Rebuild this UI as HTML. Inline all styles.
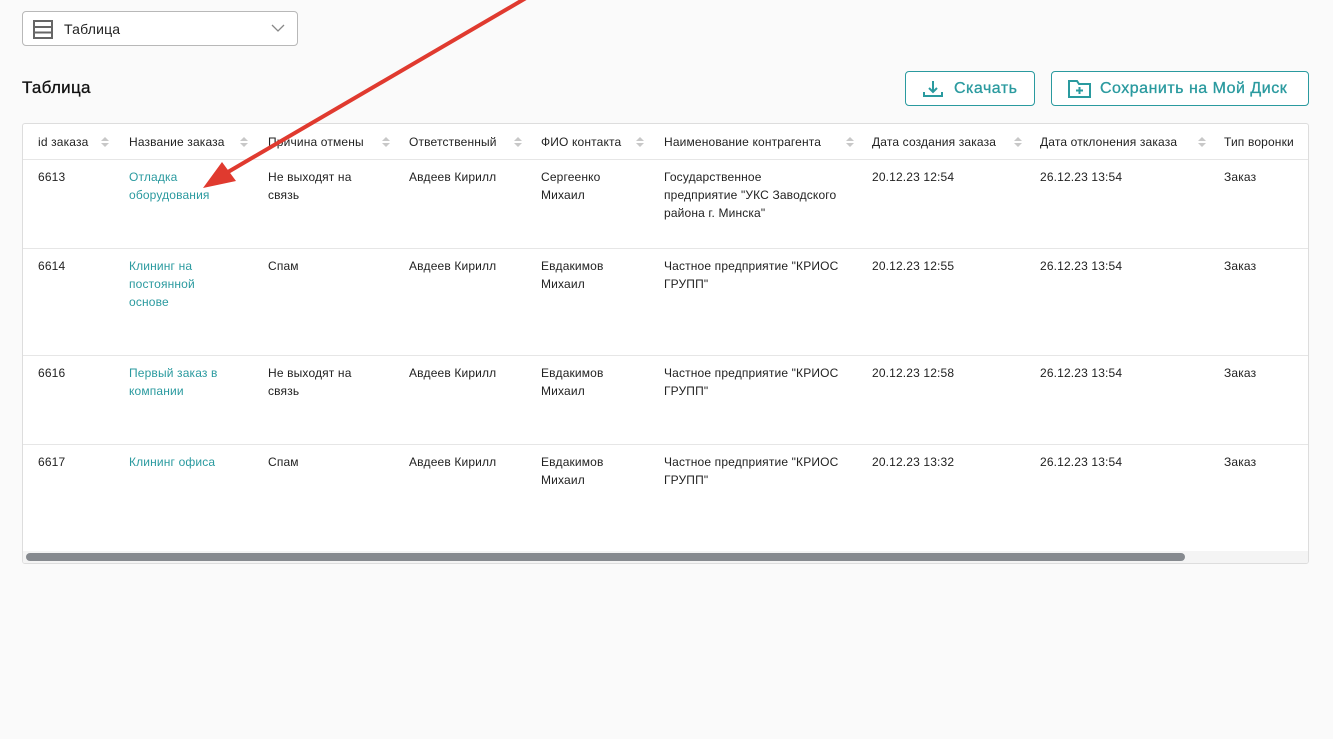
<!DOCTYPE html>
<html><head><meta charset="utf-8"><style>
*{box-sizing:border-box;margin:0;padding:0}
body{width:1333px;height:739px;background:#fafafa;font-family:"Liberation Sans",sans-serif;color:#222;position:relative;overflow:hidden;font-size:12px}
.sel{position:absolute;left:22px;top:11px;width:276px;height:35px;border:1px solid #b8b8b8;border-radius:4px;background:#fff}
.sel span{position:absolute;left:41px;top:9px;font-size:14px;letter-spacing:0.2px}
h2{position:absolute;left:22px;top:78px;font-size:17px;font-weight:normal;color:#111;letter-spacing:0.3px;-webkit-text-stroke:0.3px #111}
.btn{position:absolute;top:71px;height:35px;border:1px solid #2a9a9f;border-radius:4px;color:#2a9a9f;font-size:16px;background:#fff;letter-spacing:0.5px;-webkit-text-stroke:0.3px #2a9a9f}
.btn span{position:absolute;top:8px}
.tbl{position:absolute;left:22px;top:123px;width:1287px;height:441px;background:#fff;border:1px solid #ddd;border-radius:3px;overflow:hidden}
.c{position:absolute;line-height:18px;font-size:12px;letter-spacing:0.15px}
.hd{position:absolute;left:0;right:0;top:0;height:36px;border-bottom:1px solid #e6e6e6}
.rl{position:absolute;left:0;right:0;height:1px;background:#e6e6e6}
.a{color:#2a9a9f}
.s{position:absolute;width:7px}
.s:before,.s:after{content:"";position:absolute;left:0;border-left:4px solid transparent;border-right:4px solid transparent}
.s:before{top:0;border-bottom:4px solid #c8c8c8}
.s:after{top:6px;border-top:4px solid #c8c8c8}
.sb{position:absolute;left:0;right:0;top:427px;height:12px;background:#f4f4f4}
.th{position:absolute;left:3px;top:2px;width:1159px;height:8px;border-radius:4px;background:#868a8f}
</style></head><body>
<div class="sel">
<svg style="position:absolute;left:10px;top:8px" width="20" height="19"><rect x="1" y="1" width="18" height="17" fill="none" stroke="#666" stroke-width="2"/><line x1="1" y1="7" x2="19" y2="7" stroke="#666" stroke-width="2"/><line x1="1" y1="12.5" x2="19" y2="12.5" stroke="#666" stroke-width="2"/></svg>
<span>Таблица</span>
<svg style="position:absolute;left:248px;top:12px" width="14" height="9"><path d="M1 1l6 6 6-6" fill="none" stroke="#888" stroke-width="1.3"/></svg>
</div>
<h2>Таблица</h2>
<div class="btn" style="left:905px;width:130px">
<svg style="position:absolute;left:16px;top:8px" width="22" height="18"><path d="M11 1v11M7 8l4 4 4-4M2 12v4h18v-4" fill="none" stroke="#2a9a9f" stroke-width="2"/></svg>
<span style="left:48px">Скачать</span></div>
<div class="btn" style="left:1051px;width:258px">
<svg style="position:absolute;left:16px;top:7px" width="24" height="20"><path d="M1 2h8l2 3h11v13H1z M11.5 8v7M8 11.5h7" fill="none" stroke="#2a9a9f" stroke-width="2"/></svg>
<span style="left:48px">Сохранить на Мой Диск</span></div>
<div class="tbl">
<div class="hd"></div>
<div class="rl" style="top:124px"></div><div class="rl" style="top:231px"></div><div class="rl" style="top:320px"></div>
<div class="c" style="left:15px;top:9px">id заказа</div><i class="s" style="left:78px;top:13px"></i>
<div class="c" style="left:106px;top:9px">Название заказа</div><i class="s" style="left:217px;top:13px"></i>
<div class="c" style="left:245px;top:9px">Причина отмены</div><i class="s" style="left:359px;top:13px"></i>
<div class="c" style="left:386px;top:9px">Ответственный</div><i class="s" style="left:491px;top:13px"></i>
<div class="c" style="left:518px;top:9px">ФИО контакта</div><i class="s" style="left:613px;top:13px"></i>
<div class="c" style="left:641px;top:9px">Наименование контрагента</div><i class="s" style="left:823px;top:13px"></i>
<div class="c" style="left:849px;top:9px">Дата создания заказа</div><i class="s" style="left:991px;top:13px"></i>
<div class="c" style="left:1017px;top:9px">Дата отклонения заказа</div><i class="s" style="left:1175px;top:13px"></i>
<div class="c" style="left:1201px;top:9px">Тип воронки</div>

<div class="c" style="left:15px;top:44px">6613</div>
<div class="c a" style="left:106px;top:44px">Отладка<br>оборудования</div>
<div class="c" style="left:245px;top:44px">Не выходят на<br>связь</div>
<div class="c" style="left:386px;top:44px">Авдеев Кирилл</div>
<div class="c" style="left:518px;top:44px">Сергеенко<br>Михаил</div>
<div class="c" style="left:641px;top:44px">Государственное<br>предприятие "УКС Заводского<br>района г. Минска"</div>
<div class="c" style="left:849px;top:44px">20.12.23 12:54</div>
<div class="c" style="left:1017px;top:44px">26.12.23 13:54</div>
<div class="c" style="left:1201px;top:44px">Заказ</div>

<div class="c" style="left:15px;top:133px">6614</div>
<div class="c a" style="left:106px;top:133px">Клининг на<br>постоянной<br>основе</div>
<div class="c" style="left:245px;top:133px">Спам</div>
<div class="c" style="left:386px;top:133px">Авдеев Кирилл</div>
<div class="c" style="left:518px;top:133px">Евдакимов<br>Михаил</div>
<div class="c" style="left:641px;top:133px">Частное предприятие "КРИОС<br>ГРУПП"</div>
<div class="c" style="left:849px;top:133px">20.12.23 12:55</div>
<div class="c" style="left:1017px;top:133px">26.12.23 13:54</div>
<div class="c" style="left:1201px;top:133px">Заказ</div>

<div class="c" style="left:15px;top:240px">6616</div>
<div class="c a" style="left:106px;top:240px">Первый заказ в<br>компании</div>
<div class="c" style="left:245px;top:240px">Не выходят на<br>связь</div>
<div class="c" style="left:386px;top:240px">Авдеев Кирилл</div>
<div class="c" style="left:518px;top:240px">Евдакимов<br>Михаил</div>
<div class="c" style="left:641px;top:240px">Частное предприятие "КРИОС<br>ГРУПП"</div>
<div class="c" style="left:849px;top:240px">20.12.23 12:58</div>
<div class="c" style="left:1017px;top:240px">26.12.23 13:54</div>
<div class="c" style="left:1201px;top:240px">Заказ</div>

<div class="c" style="left:15px;top:329px">6617</div>
<div class="c a" style="left:106px;top:329px">Клининг офиса</div>
<div class="c" style="left:245px;top:329px">Спам</div>
<div class="c" style="left:386px;top:329px">Авдеев Кирилл</div>
<div class="c" style="left:518px;top:329px">Евдакимов<br>Михаил</div>
<div class="c" style="left:641px;top:329px">Частное предприятие "КРИОС<br>ГРУПП"</div>
<div class="c" style="left:849px;top:329px">20.12.23 13:32</div>
<div class="c" style="left:1017px;top:329px">26.12.23 13:54</div>
<div class="c" style="left:1201px;top:329px">Заказ</div>
<div class="sb"><div class="th"></div></div>
</div>
<svg style="position:absolute;left:0;top:0" width="1333" height="739">
<line x1="526" y1="-2" x2="228" y2="172" stroke="#e03a2f" stroke-width="4"/>
<path d="M203 188L222 162L236 181Z" fill="#e03a2f"/>
</svg>
</body></html>
